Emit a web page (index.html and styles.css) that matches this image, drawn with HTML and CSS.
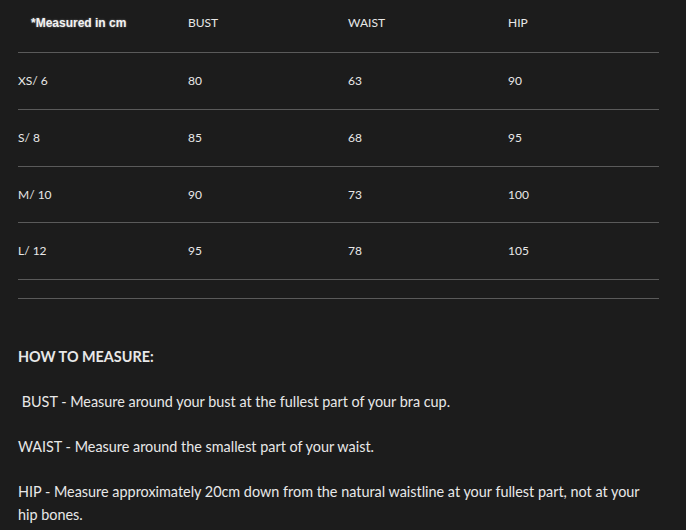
FILE: index.html
```html
<!DOCTYPE html>
<html>
<head>
<meta charset="utf-8">
<link rel="stylesheet" href="styles.css">
</head>
<body>
<div class="page">
  <table class="sizes">
    <thead>
      <tr>
        <th class="note">*Measured in cm</th>
        <th>BUST</th>
        <th>WAIST</th>
        <th>HIP</th>
      </tr>
    </thead>
    <tbody>
      <tr><td>XS/ 6</td><td>80</td><td>63</td><td>90</td></tr>
      <tr><td>S/ 8</td><td>85</td><td>68</td><td>95</td></tr>
      <tr class="short"><td>M/ 10</td><td>90</td><td>73</td><td>100</td></tr>
      <tr><td>L/ 12</td><td>95</td><td>78</td><td>105</td></tr>
      <tr class="empty"><td></td><td></td><td></td><td></td></tr>
    </tbody>
  </table>
  <div class="howto">
    <p class="title">HOW TO MEASURE:</p>
    <p>&nbsp;BUST - Measure around your bust at the fullest part of your bra cup.</p>
    <p>WAIST - Measure around the smallest part of your waist.</p>
    <p>HIP - Measure approximately 20cm down from the natural waistline at your fullest part, not at your hip bones.</p>
  </div>
</div>
</body>
</html>
```
FILE: styles.css
```css
html, body {
  margin: 0;
  padding: 0;
  background: #1c1c1c;
}
body {
  font-family: "Lato", "Open Sans", sans-serif;
  color: #e8e8e8;
}
.page {
  padding: 0 27px 0 18px;
}
.sizes {
  width: 641px;
  border-collapse: collapse;
  font-size: 12px;
}
.sizes th, .sizes td {
  text-align: left;
  font-weight: normal;
  padding: 0;
  vertical-align: middle;
  border-bottom: 1px solid #5a5a5a;
}
.sizes th {
  height: 52px;
  padding-bottom: 6px;
  box-sizing: border-box;
}
.sizes td {
  height: 57px;
  box-sizing: border-box;
}
.sizes tr.short td {
  height: 56px;
}
.sizes th:nth-child(1), .sizes td:nth-child(1) { width: 170px; }
.sizes th:nth-child(2), .sizes td:nth-child(2) { width: 160px; }
.sizes th:nth-child(3), .sizes td:nth-child(3) { width: 160px; }
.sizes th.note {
  font-family: "Liberation Sans", Arial, sans-serif;
  font-weight: bold;
  font-size: 12px;
  padding-left: 13px;
  color: #f2f2f2;
  text-shadow: 0 0 2px rgba(255,255,255,0.45);
}
.sizes tr.empty td {
  height: 19px;
}
.howto {
  padding-top: 46px;
  font-size: 14.4px;
  line-height: 23px;
  padding-right: 18px;
}
.howto p {
  margin: 0 0 22px;
}
.howto .title {
  font-weight: bold;
}
```
